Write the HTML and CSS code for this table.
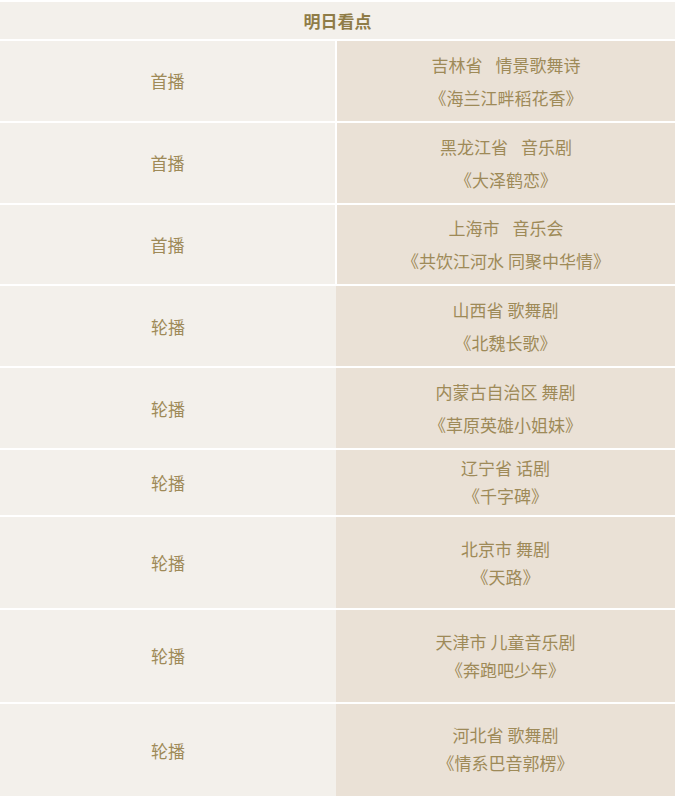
FILE: index.html
```html
<!DOCTYPE html>
<html lang="zh-CN">
<head>
<meta charset="utf-8">
<title>明日看点</title>
<link rel="stylesheet" href="styles.css">
</head>
<body>
<div class="table">
  <div class="head">明日看点</div>

  <div class="row split">
    <div class="cell left">首播</div>
    <div class="cell right loose"><span>吉林省<span class="gap"></span>情景歌舞诗</span><span>《海兰江畔稻花香》</span></div>
  </div>
  <div class="row split">
    <div class="cell left">首播</div>
    <div class="cell right loose"><span>黑龙江省<span class="gap"></span>音乐剧</span><span>《大泽鹤恋》</span></div>
  </div>
  <div class="row split">
    <div class="cell left">首播</div>
    <div class="cell right loose"><span>上海市<span class="gap"></span>音乐会</span><span>《共饮江河水 同聚中华情》</span></div>
  </div>
  <div class="row joined">
    <div class="cell left">轮播</div>
    <div class="cell right loose"><span>山西省 歌舞剧</span><span>《北魏长歌》</span></div>
  </div>
  <div class="row joined">
    <div class="cell left">轮播</div>
    <div class="cell right loose"><span>内蒙古自治区 舞剧</span><span>《草原英雄小姐妹》</span></div>
  </div>
  <div class="row joined">
    <div class="cell left">轮播</div>
    <div class="cell right tight"><span>辽宁省 话剧</span><span>《千字碑》</span></div>
  </div>
  <div class="row joined">
    <div class="cell left">轮播</div>
    <div class="cell right tight tall"><span>北京市 舞剧</span><span>《天路》</span></div>
  </div>
  <div class="row joined">
    <div class="cell left">轮播</div>
    <div class="cell right tight tall"><span>天津市 儿童音乐剧</span><span>《奔跑吧少年》</span></div>
  </div>
  <div class="row joined">
    <div class="cell left">轮播</div>
    <div class="cell right tight tall"><span>河北省 歌舞剧</span><span>《情系巴音郭楞》</span></div>
  </div>
</div>
</body>
</html>
```

FILE: styles.css
```css
html, body {
  margin: 0;
  padding: 0;
  background: #ffffff;
}

body {
  font-family: "Noto Sans CJK SC", "Noto Sans", sans-serif;
  font-size: 17px;
  color: #9e8a58;
}

.table {
  width: 675px;
  padding-top: 2px;
  display: flex;
  flex-direction: column;
  gap: 2px;
}

.head {
  height: 37px;
  background: #f3f0eb;
  display: flex;
  align-items: center;
  justify-content: center;
  font-weight: bold;
  color: #8f7c47;
}

.row {
  display: grid;
}

.row.split {
  grid-template-columns: 335px 338px;
  column-gap: 2px;
}

.row.joined {
  grid-template-columns: 336px 339px;
}

.cell {
  display: flex;
  flex-direction: column;
  align-items: center;
  justify-content: center;
  text-align: center;
}

.left {
  background: #f3f0eb;
}

.right {
  background: #eae1d6;
}

.loose {
  line-height: 33px;
  padding: 6.9px 0;
}

.tight {
  line-height: 28px;
  padding: 4.5px 0;
}

.tight.tall {
  padding: 17.7px 0;
}

.row:last-child .tight.tall {
  padding: 17.7px 0 19px;
}

.gap {
  display: inline-block;
  width: 13px;
}
```
